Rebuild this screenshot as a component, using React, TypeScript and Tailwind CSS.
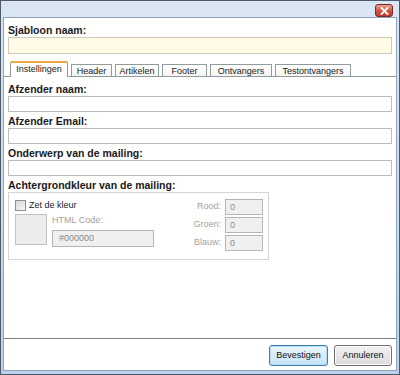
import React from "react";

const tabs = [
  { label: "Instellingen", w: "w-[58px]", active: true },
  { label: "Header", w: "w-[41px]" },
  { label: "Artikelen", w: "w-[44px]" },
  { label: "Footer", w: "w-[45px]" },
  { label: "Ontvangers", w: "w-[62px]" },
  { label: "Testontvangers", w: "w-[76px]" },
];

function Label({ children, className = "" }: { children: React.ReactNode; className?: string }) {
  return (
    <div className={"text-[10.5px] font-bold leading-[13px] h-[13px] text-[#1a1a1a] whitespace-nowrap " + className}>
      {children}
    </div>
  );
}

function TextInput({ className = "" }: { className?: string }) {
  return <div className={"h-[16px] border border-[#b9bcc2] bg-white " + className} />;
}

export default function App() {
  return (
    <div
      className="w-[400px] h-[375px] flex flex-col border border-[#4d5a67] bg-gradient-to-b from-[#dae6f4] to-[#bcd2ea] overflow-hidden"
      style={{ fontFamily: '"Liberation Sans", Arial, sans-serif' }}
    >
      {/* title bar */}
      <div className="h-[16px] flex justify-end items-start pt-[3px] pr-[6px] shrink-0">
        <div className="w-[18px] h-[13px] rounded-[3px] border border-[#7a2a20] bg-gradient-to-b from-[#e9a394] via-[#d4533f] to-[#c2392a] flex items-center justify-center">
          <svg width="9" height="8" viewBox="0 0 9 8">
            <path d="M1.5 1 L7.5 7 M7.5 1 L1.5 7" stroke="#ffffff" strokeWidth="1.8" strokeLinecap="square" />
          </svg>
        </div>
      </div>
      {/* content */}
      <div className="flex-1 mx-[2px] mb-[3px] border border-[#8ea3bb] bg-white flex flex-col">
        <div className="pl-[4px] pr-[4px] pt-[6px]">
          <Label>Sjabloon naam:</Label>
          <div className="mt-[0px] h-[17px] border border-[#cfcab6] bg-[#fffbe7]" />
        </div>

        {/* tabs */}
        <div className="mt-[8px] flex items-end h-[15px] border-b border-[#919b9c] pl-[6px] gap-[3px]">
          {tabs.map((t) =>
            t.active ? (
              <div
                key={t.label}
                className={`${t.w} h-[16px] -mb-[1px] bg-white border border-[#919b9c] border-b-0 border-t-[2px] border-t-[#f0a73d] rounded-t-[2px] text-[9px] leading-[13px] text-center text-[#222] whitespace-nowrap`}
              >
                {t.label}
              </div>
            ) : (
              <div
                key={t.label}
                className={`${t.w} h-[12px] bg-gradient-to-b from-white to-[#f4f4f2] border border-[#919b9c] border-b-0 text-[9px] leading-[12px] text-center text-[#222] whitespace-nowrap`}
              >
                {t.label}
              </div>
            )
          )}
        </div>

        <div className="px-[4px] pt-[6px] flex flex-col">
          <Label>Afzender naam:</Label>
          <TextInput className="mt-[0px]" />
          <Label className="mt-[3px]">Afzender Email:</Label>
          <TextInput />
          <Label className="mt-[3px]">Onderwerp van de mailing:</Label>
          <TextInput />
          <Label className="mt-[3px]">Achtergrondkleur van de mailing:</Label>

          {/* group box */}
          <div className="w-[261px] h-[68px] border border-[#d5d5d5] shadow-[inset_1px_1px_0_#ffffff] flex pl-[6px] pr-[5px] pt-[7px]">
            <div className="flex flex-col">
              <div className="flex items-center gap-[3px] h-[11px]">
                <div className="w-[11px] h-[11px] border border-[#8f8f8f] bg-gradient-to-br from-[#d8d8d8] to-[#f7f7f7]" />
                <span className="text-[9px] leading-[11px] text-[#222]">Zet de kleur</span>
              </div>
              <div className="flex mt-[3px]">
                <div className="w-[32px] h-[31px] border border-[#c2c2c2] bg-[#ececec]" />
                <div className="ml-[5px] flex flex-col">
                  <span className="text-[9px] leading-[12px] text-[#a3a3a3] mt-[0px]">HTML Code:</span>
                  <div className="mt-[4px] w-[102px] h-[17px] border border-[#b5b5b5] bg-[#f0f0f0] text-[9px] leading-[15px] text-[#8a8a8a] pl-[6px]">
                    #000000
                  </div>
                </div>
              </div>
            </div>
            <div className="ml-auto flex flex-col gap-[2px] -mt-[1px]">
              {["Rood:", "Groen:", "Blauw:"].map((l) => (
                <div key={l} className="flex items-center justify-end gap-[4px]">
                  <span className="text-[9px] text-[#a3a3a3]">{l}</span>
                  <div className="w-[38px] h-[16px] border border-[#b5b5b5] bg-[#f0f0f0] text-[9px] leading-[14px] text-[#8a8a8a] pl-[4px]">
                    0
                  </div>
                </div>
              ))}
            </div>
          </div>
        </div>

        <div className="flex-1" />
        <div className="border-t border-[#808080] border-b border-b-white" />
        <div className="flex justify-end gap-[6px] pr-[4px] pt-[5px] pb-[4px]">
          <div className="w-[59px] h-[21px] rounded-[3px] border border-[#3c7fb1] bg-gradient-to-b from-[#eaf6fd] to-[#c4e5f8] shadow-[inset_0_0_0_1px_#b5def5] text-[9px] leading-[19px] text-center text-[#111]">
            Bevestigen
          </div>
          <div className="w-[58px] h-[21px] rounded-[3px] border border-[#707070] bg-gradient-to-b from-[#f2f2f2] to-[#dcdcdc] shadow-[inset_0_0_0_1px_#fbfbfb] text-[9px] leading-[19px] text-center text-[#111]">
            Annuleren
          </div>
        </div>
      </div>
    </div>
  );
}
